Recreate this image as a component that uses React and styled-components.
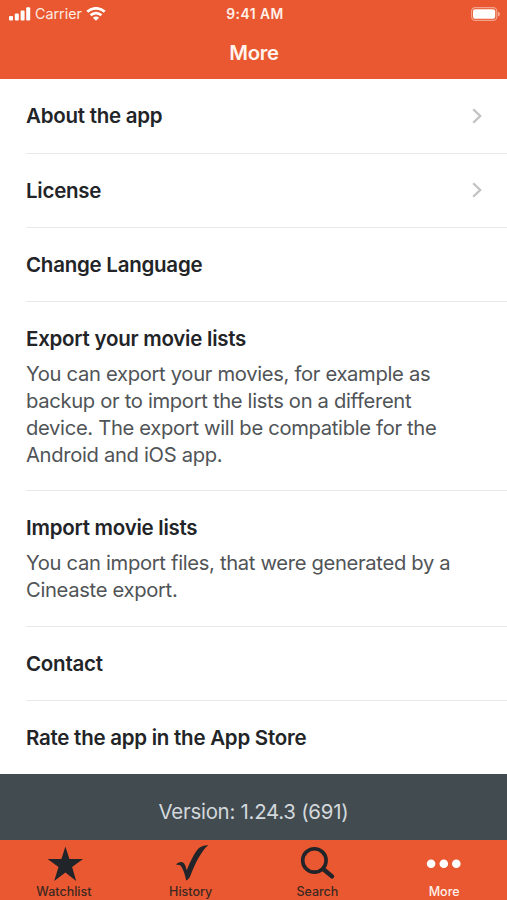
import React from 'react'
import styled, { createGlobalStyle } from 'styled-components'

const items = [
  { title: 'About the app', link: true },
  { title: 'License', link: true },
  { title: 'Change Language' },
  {
    title: 'Export your movie lists',
    lines: [
      'You can export your movies, for example as',
      'backup or to import the lists on a different',
      'device. The export will be compatible for the',
      'Android and iOS app.',
    ],
  },
  {
    title: 'Import movie lists',
    lines: [
      'You can import files, that were generated by a',
      'Cineaste export.',
    ],
  },
  { title: 'Contact' },
  { title: 'Rate the app in the App Store' },
]

export default () => (
  <Screen>
    <GlobalStyle />
    <Header>
      <StatusBar>
        <Carrier>
          <SignalIcon />
          <span>Carrier</span>
          <WifiIcon />
        </Carrier>
        <Time>9:41 AM</Time>
        <Battery>
          <BatteryIcon />
        </Battery>
      </StatusBar>
      <Heading>More</Heading>
    </Header>
    <List>
      {items.map(({ title, link, lines }) => (
        <Item key={title}>
          <Row>
            <Title>{title}</Title>
            {link && <Chevron />}
          </Row>
          {lines && (
            <Description>
              {lines.map(line => <Line key={line}>{line}</Line>)}
            </Description>
          )}
        </Item>
      ))}
    </List>
    <Version>Version: 1.24.3 (691)</Version>
    <TabBar>
      <Tab><StarIcon />Watchlist</Tab>
      <Tab><CheckIcon />History</Tab>
      <Tab><SearchIcon />Search</Tab>
      <Tab $active><DotsIcon />More</Tab>
    </TabBar>
  </Screen>
)

const SignalIcon = () => (
  <svg width="22" height="14" viewBox="0 0 22 14" fill="#fff">
    <rect x="0" y="9" width="4" height="4.5" rx="1" />
    <rect x="5.8" y="6.5" width="4" height="7" rx="1" />
    <rect x="11.6" y="3.6" width="4" height="9.9" rx="1" />
    <rect x="17.2" y="0.3" width="4" height="13.2" rx="1" />
  </svg>
)

const WifiIcon = () => (
  <svg width="20" height="14" viewBox="0 0 20 14" fill="none" stroke="#fff" strokeWidth="2.7">
    <path d="M1.3 4.8C6.2 0.1 13.8 0.1 18.7 4.8" />
    <path d="M4.6 8.3C7.7 5.3 12.3 5.3 15.4 8.3" />
    <path d="M10 13.8L6.9 10.7C8.7 9.1 11.3 9.1 13.1 10.7Z" fill="#fff" stroke="none" />
  </svg>
)

const BatteryIcon = () => (
  <svg width="30" height="14" viewBox="0 0 30 14">
    <rect x="0.6" y="0.6" width="25.2" height="12.8" rx="3.6" fill="none" stroke="#fff" strokeOpacity="0.45" strokeWidth="1.2" />
    <rect x="2" y="2.2" width="22.2" height="9.6" rx="2" fill="#fff" />
    <path d="M27 4.7C29.7 5.7 29.7 8.3 27 9.3Z" fill="#fff" fillOpacity="0.5" />
  </svg>
)

const Chevron = () => (
  <svg width="10" height="16" viewBox="0 0 10 16" fill="none" stroke="#c2c2c4" strokeWidth="2.3">
    <path d="M1.2 1.2L8.2 8L1.2 14.8" />
  </svg>
)

const StarIcon = () => (
  <svg width="40" height="40" viewBox="0 0 40 40" fill="#212429">
    <path d="M21.4 2.5L25.4 15.1H39L28.1 22.9L32.2 37L21.4 28.6L10.2 37L14.5 22.9L3.6 15.1H17.4Z" />
  </svg>
)

const CheckIcon = () => (
  <svg width="40" height="40" viewBox="0 0 40 40" fill="#212429">
    <path d="M5 20.8C6.5 18.5 9.7 17.6 11.8 18.4C13.9 19.2 14.8 22.6 15.8 26.3C19.8 16.3 24 8.2 27.5 4.6C29.6 2.4 33 1.1 37.3 1.3C31.3 6.1 24.5 17.9 18.8 33.3C17.7 34.7 16.5 35.9 15.2 36.5C14.1 30.6 11.8 23.8 9.4 21.4C8.2 20.6 6.8 20.5 5 20.8Z" />
  </svg>
)

const SearchIcon = () => (
  <svg width="40" height="40" viewBox="0 0 40 40" fill="none" stroke="#212429">
    <circle cx="17.4" cy="16.4" r="11.7" strokeWidth="3.6" />
    <path d="M26.2 25L35 32.4" strokeWidth="4.4" strokeLinecap="round" />
  </svg>
)

const DotsIcon = () => (
  <svg width="40" height="40" viewBox="0 0 40 40" fill="#fff">
    <circle cx="7.1" cy="19.8" r="4.3" />
    <circle cx="19.8" cy="19.8" r="4.3" />
    <circle cx="32.3" cy="19.8" r="4.3" />
  </svg>
)

const GlobalStyle = createGlobalStyle`
  * {
    box-sizing: border-box;
  }

  body {
    margin: 0;
    font-family: Inter, 'Liberation Sans', sans-serif;
  }
`

const Screen = styled.div`
  display: flex;
  flex-direction: column;
  height: 900px;
  background-color: white;
  overflow: hidden;
`

const Header = styled.header`
  flex: none;
  height: 79.4px;
  background-color: #e95830;
  color: white;
`

const StatusBar = styled.div`
  display: grid;
  grid-template-columns: 1fr auto 1fr;
  align-items: center;
  height: 27px;
  padding: 0 6px 0 9px;
`

const Carrier = styled.div`
  display: flex;
  align-items: center;
  gap: 4px;
  font-size: 14.3px;
  color: #ffe9e2;
`

const Time = styled.div`
  font-size: 13.8px;
  font-weight: 600;
  letter-spacing: .5px;
  color: #fff0ea;
`

const Battery = styled.div`
  display: flex;
  justify-content: flex-end;
`

const Heading = styled.h1`
  margin: 0;
  padding-left: 1px;
  line-height: 51px;
  font-size: 20.3px;
  font-weight: 600;
  letter-spacing: -.3px;
  text-align: center;
  color: #fff3ee;
`

const List = styled.ul`
  flex: 1;
  min-height: 0;
  margin: 0;
  padding: 0 0 0 26px;
  list-style: none;
`

const Item = styled.li`
  border-bottom: 1px solid #e9e9e9;

  &:last-child {
    border-bottom: none;
  }
`

const Row = styled.div`
  display: flex;
  align-items: center;
  justify-content: space-between;
  height: 73.2px;
  padding-right: 25px;
`

const Title = styled.h2`
  margin: 0;
  font-size: 20.5px;
  font-weight: 600;
  letter-spacing: -.25px;
  color: #222427;
`

const Description = styled.div`
  margin-top: -14px;
  padding-bottom: 21.8px;
  font-size: 20.2px;
  line-height: 26.8px;
  letter-spacing: -.32px;
  color: #505457;
`

const Line = styled.div`
  white-space: nowrap;
`

const Version = styled.div`
  flex: none;
  height: 65.6px;
  line-height: 75px;
  background-color: #424b50;
  color: #d3d8dc;
  font-size: 20.4px;
  letter-spacing: -.25px;
  text-align: center;
`

const TabBar = styled.nav`
  display: grid;
  grid-template-columns: repeat(4, 1fr);
  flex: none;
  height: 60px;
  background-color: #e95830;
`

const Tab = styled.div`
  display: flex;
  flex-direction: column;
  align-items: center;
  padding: 4px 0 0 1px;
  font-size: 12.5px;
  font-weight: 500;
  line-height: 15px;
  color: ${ props => props.$active ? '#fff0ea' : '#3d2822' };
`
